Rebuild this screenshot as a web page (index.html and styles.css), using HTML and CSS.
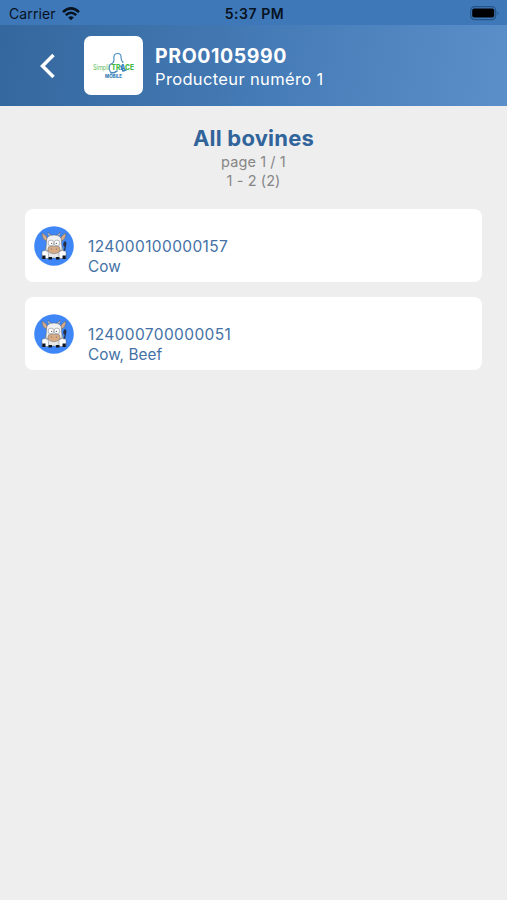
FILE: index.html
```html
<!DOCTYPE html>
<html lang="en">
<head>
<meta charset="utf-8">
<title>All bovines</title>
<link rel="stylesheet" href="styles.css">
</head>
<body>
<div class="status">
  <div class="carrier"><span>Carrier</span>
    <svg width="18" height="14" viewBox="0 0 18 14" fill="none" stroke="#07121f" stroke-width="2.5"><path d="M1 5.1Q9-2.3 17 5.1M3.8 8.1Q9 3.3 14.2 8.1"/><path d="M6.2 10.4Q9 8 11.8 10.4L9 13.2Z" fill="#07121f" stroke="none"/></svg>
  </div>
  <time class="clock">5:37 PM</time>
  <svg class="battery" width="30" height="15" viewBox="0 0 30 15"><rect x=".7" y=".7" width="25" height="13" rx="4" fill="none" stroke="#245487" stroke-width="1.2"/><rect x="2.2" y="2.6" width="22" height="9" rx="2" fill="#000"/><path d="M27.3 5.3q2.4 1.9 0 3.8z" fill="#245487"/></svg>
</div>
<header class="header">
  <svg class="back" width="18" height="26" viewBox="0 0 18 26" fill="none" stroke="#fff" stroke-width="3.5"><path d="M14.5 2 3.5 13 14.5 24"/></svg>
  <div class="logo">
    <svg width="59" height="59" viewBox="0 0 59 59">
      <g fill="none" stroke="#3f87bd" stroke-width="1.1" stroke-linecap="round"><path d="M27 36.500q-3-3-1-8 4-1 4-5-1-6 3.500-6 4 0 3.500 4 0 3 2 5"/><path d="M27 37q4 0 6-2M37 30l2 5 3-1" stroke-width="1.6"/></g>
      <text x="9" y="34" class="simpli" textLength="16" lengthAdjust="spacingAndGlyphs">Simpli</text>
      <text x="27.5" y="34.3" class="trace" textLength="22.5" lengthAdjust="spacingAndGlyphs">TR<tspan fill="#347fb9">A</tspan>CE</text>
      <text x="21" y="41.5" class="mobile" textLength="17" lengthAdjust="spacingAndGlyphs">MOBILE</text>
    </svg>
  </div>
  <div class="producer"><strong>PRO0105990</strong><span>Producteur numéro 1</span></div>
</header>
<main>
  <h1>All bovines</h1>
  <p class="page">page 1 / 1</p>
  <p class="range">1 - 2 (2)</p>
  <ul class="list">
    <li class="card">
      <svg class="cow" width="40" height="40" viewBox="0 0 40 40">
        <defs><g id="cow">
          <circle cx="20" cy="20" r="19.8" fill="#3f86f7"/>
          <path d="M29 25q3-1 2-7" fill="none" stroke="#252e40" stroke-width="1.2"/><path d="M29.5 20q-1-4 2-5 2 3 0 6z" fill="#252e40"/>
          <g stroke="#4b5059" stroke-width=".4">
            <path d="M12 20q-2 8 0 12h16q3-5 0-12z" fill="#e7e7e8"/>
            <path d="M8 25.500q3-2 6 0l1 7H8zM25 25.500q3-2 7 0v7h-7z" fill="#fff"/>
            <path d="M16 10q-3-1-2-4 1 3 4 3M22 9q3 0 4-3 1 3-2 4" fill="#ddd"/>
            <path d="M14 14q-1-5-6-7 0 7 5 8zM26 14q1-5 6-7 0 7-5 8z" fill="#cfaa8c"/>
            <path d="M12.500 15q0-6 7.500-6t7.500 6l.500 9q-8 4-16 0z" fill="#f0f0f0"/>
            <circle cx="17" cy="17" r="2.900" fill="#fff"/><circle cx="23" cy="17" r="2.900" fill="#fff"/>
            <path d="M14 23q0-2.800 3-2.800h6q3 0 3 2.800v2q-2 2.700-6 2.700T14 25z" fill="#d6ab86"/>
          </g>
          <path d="M8.200 29.500h3.300V33H8.200zM14.500 31h3.500v2.500h-3.500zM22 31h3.500v2.500H22zM28.500 29.500h3.300V33h-3.300z" fill="#111722"/>
          <g fill="#333"><circle cx="17.700" cy="17.300" r=".6"/><circle cx="22.300" cy="17.300" r=".6"/></g>
          <g fill="#8d6451"><circle cx="17.500" cy="23" r=".6"/><circle cx="22.500" cy="23" r=".6"/></g>
        </g></defs>
        <use href="#cow"/>
      </svg>
      <div class="info"><span class="number">124000100000157</span><span class="kind">Cow</span></div>
    </li>
    <li class="card">
      <svg class="cow" width="40" height="40" viewBox="0 0 40 40"><use href="#cow"/></svg>
      <div class="info"><span class="number">124000700000051</span><span class="kind">Cow, Beef</span></div>
    </li>
  </ul>
</main>
</body>
</html>
```
FILE: styles.css
```css
* { box-sizing: border-box; }
body { margin: 0; min-height: 900px; background: #eee; font-family: Inter, "Liberation Sans", sans-serif; }
.status { height: 25px; padding: 2px 7px 0 9px; display: grid; grid-template-columns: 1fr auto 1fr; align-items: center; background: #3e78b8; color: #07121f; }
.carrier { display: flex; align-items: center; gap: 6px; font-size: 14px; letter-spacing: .1px; }
.clock { font-size: 14px; font-weight: 600; letter-spacing: .55px; }
.battery { justify-self: end; }
.header { height: 81px; padding-left: 39px; display: flex; align-items: center; background: linear-gradient(100deg, #34679d, #447ab5 50%, #5a8fca); color: #fff; }
.back { flex: none; }
.logo { width: 59px; height: 59px; margin-left: 27px; border-radius: 7px; background: #fff; overflow: hidden; }
.logo svg { display: block; }
.simpli { font-size: 7px; fill: #58bd55; }
.trace { font-size: 7.5px; font-weight: 800; fill: #43ba43; }
.mobile { font-size: 4.6px; font-weight: 800; fill: #367eb6; }
.producer { margin: 3px 0 0 12px; display: flex; flex-direction: column; }
.producer strong { font-size: 19.5px; line-height: 24px; font-weight: 700; letter-spacing: .6px; }
.producer span { font-size: 16.5px; line-height: 22px; letter-spacing: .35px; }
main { padding: 18px 25px 0; text-align: center; }
h1 { margin: 0; font-size: 22px; line-height: 28px; font-weight: 700; letter-spacing: .2px; color: #31649b; }
p { margin: 0; font-size: 14.5px; line-height: 19px; letter-spacing: .1px; color: #868686; }
.list { margin: 19px 0 0; padding: 0; display: grid; gap: 15px; list-style: none; text-align: left; }
.card { height: 73px; padding-left: 9px; display: flex; align-items: center; gap: 14px; border-radius: 8px; background: #fff; }
.info { display: flex; flex-direction: column; padding-top: 22px; line-height: 20px; color: #4471a5; }
.number { font-size: 15.5px; letter-spacing: .38px; }
.kind { font-size: 15.3px; letter-spacing: .05px; }
```
